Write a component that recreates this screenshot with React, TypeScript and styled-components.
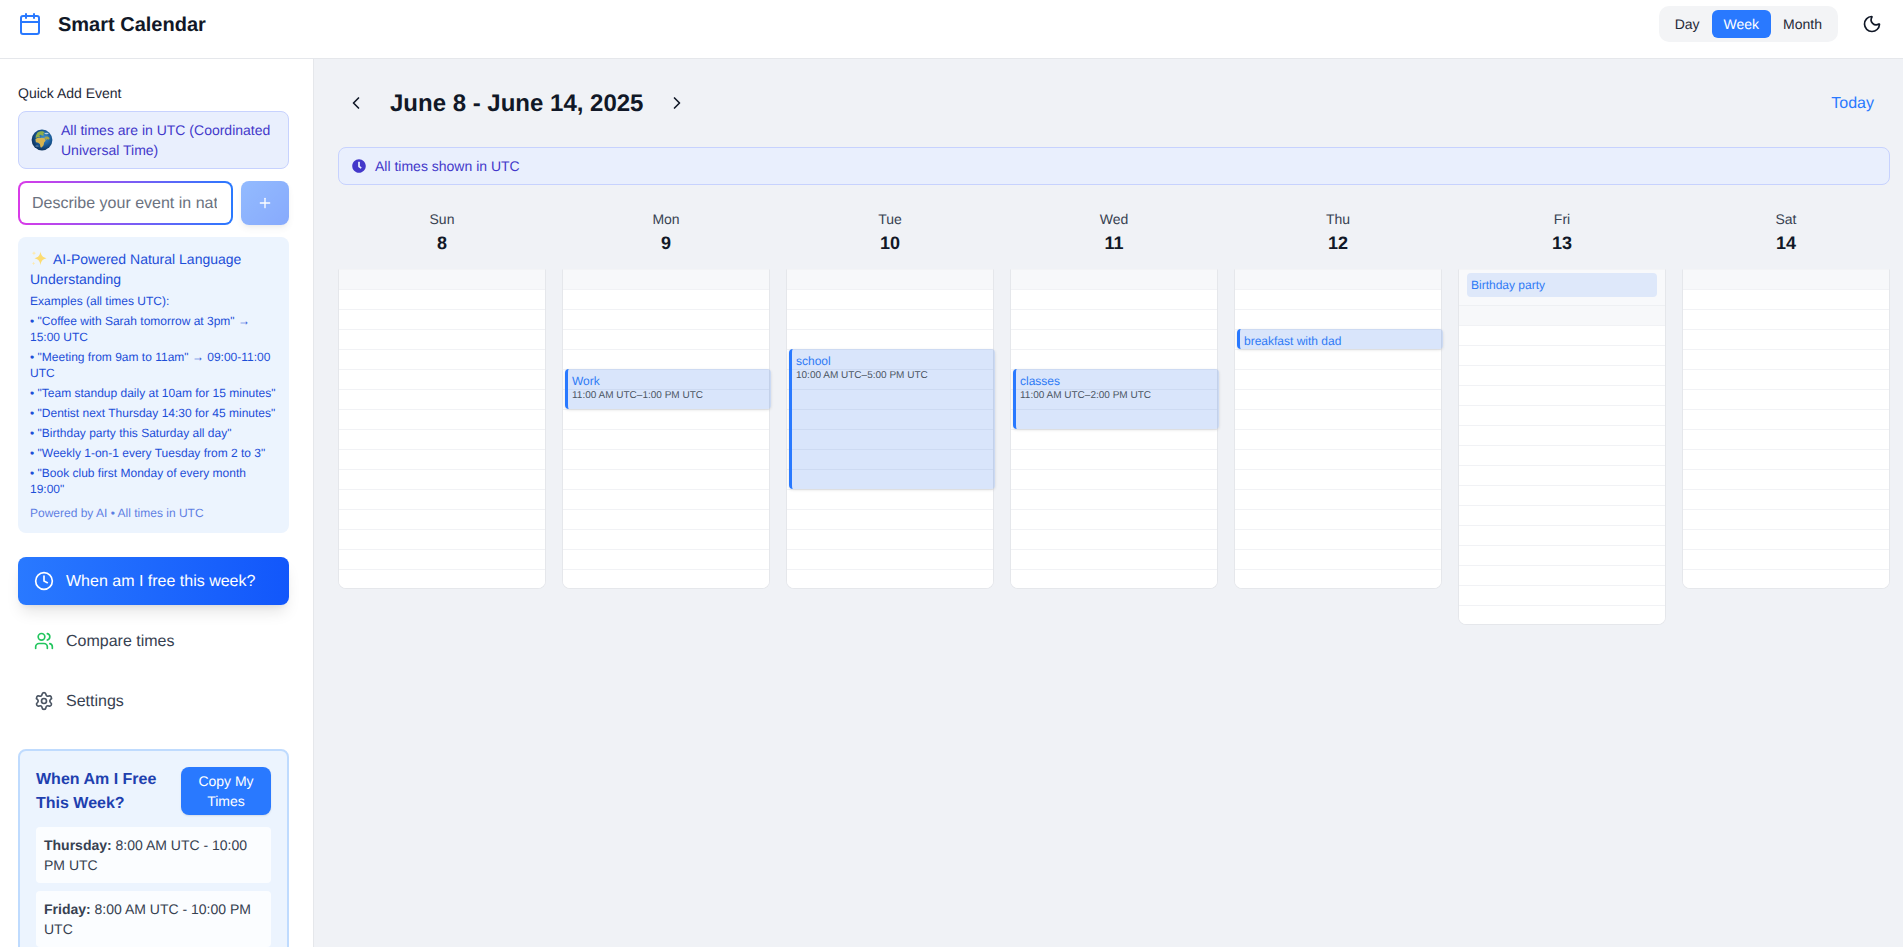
import React from "react";
import styled, { createGlobalStyle } from "styled-components";
import { Calendar, ChevronLeft, ChevronRight, Clock, Moon, Plus, Settings, Users } from "lucide-react";
import { FaClock } from "react-icons/fa";

const Global = createGlobalStyle`
  html, body { margin: 0; height: 100%; overflow: hidden; }
  body {
    font-family: "Liberation Sans", Arial, sans-serif;
    color: #111827;
    background: #f0f2f6;
    text-rendering: geometricPrecision;
  }
  * { box-sizing: border-box; }
  button, input { font-family: inherit; text-rendering: geometricPrecision; }
  button { border: 0; background: none; cursor: pointer; }
`;

const Page = styled.div`
  height: 947px;
  display: flex;
  flex-direction: column;
  overflow: hidden;
`;

const TopBar = styled.header`
  flex: 0 0 59px;
  background: #fff;
  border-bottom: 1px solid #e5e7eb;
  padding: 6px 13px 0 18px;
  display: flex;
  justify-content: space-between;
  align-items: flex-start;
`;

const Brand = styled.div`
  display: flex;
  align-items: center;
  gap: 16px;
  height: 36px;
  color: #2979ff;
`;

const BrandName = styled.h1`
  margin: 0;
  padding-top: 2px;
  font-size: 20px;
  line-height: 28px;
  font-weight: 700;
  color: #111827;
`;

const TopActions = styled.div`
  display: flex;
  align-items: center;
  gap: 16px;
`;

const ViewToggle = styled.div`
  display: flex;
  padding: 4px;
  background: #f3f4f6;
  border-radius: 10px;
`;

const ViewButton = styled.button<{ $active?: boolean }>`
  height: 28px;
  padding: 0 12px;
  font-size: 14px;
  border-radius: 6px;
  color: ${(p) => (p.$active ? "#fff" : "#1f2937")};
  background: ${(p) => (p.$active ? "#2979ff" : "transparent")};
`;

const IconButton = styled.button`
  width: 36px;
  height: 36px;
  padding: 8px;
  display: flex;
  align-items: center;
  justify-content: center;
  color: #111827;
`;

const Body = styled.div`
  flex: 1;
  min-height: 0;
  display: flex;
`;

const Sidebar = styled.aside`
  flex: 0 0 314px;
  background: #fff;
  border-right: 1px solid #e5e7eb;
  padding: 24px 24px 0 18px;
  overflow: hidden;
`;

const SectionLabel = styled.div`
  font-size: 14px;
  line-height: 20px;
  color: #1f2937;
  margin-bottom: 8px;
`;

const UtcNote = styled.div`
  display: flex;
  align-items: center;
  gap: 8px;
  padding: 8px 12px;
  background: #e9effd;
  border: 1px solid #c7d2fe;
  border-radius: 8px;
  font-size: 14px;
  line-height: 20px;
  color: #4338ca;
`;

const GlobeIcon = styled.svg`
  flex: 0 0 22px;
  width: 22px;
  height: 22px;
`;

const QuickRow = styled.div`
  display: flex;
  gap: 8px;
  margin-top: 12px;
`;

const InputFrame = styled.div`
  flex: 1;
  min-width: 0;
  height: 44px;
  padding: 2px;
  border-radius: 8px;
  background: linear-gradient(90deg, #d93be8, #2979ff);
`;

const EventInput = styled.input`
  width: 100%;
  height: 100%;
  border: 0;
  outline: 0;
  border-radius: 6px;
  background: #fff;
  padding: 2px 14px 0 12px;
  font-size: 16px;
  color: #111827;
  &::placeholder { color: #6b7280; opacity: 1; }
`;

const AddButton = styled.button`
  flex: 0 0 48px;
  height: 44px;
  border-radius: 8px;
  display: flex;
  align-items: center;
  justify-content: center;
  color: #fff;
  background: linear-gradient(135deg, #2979ff, #1257fb);
  opacity: 0.5;
  box-shadow: 0 4px 6px -1px rgba(0, 0, 0, 0.1), 0 2px 4px -2px rgba(0, 0, 0, 0.1);
`;

const HintPanel = styled.div`
  margin-top: 12px;
  padding: 12px;
  background: #ecf4fe;
  border-radius: 8px;
  color: #1d4ed8;
  font-size: 12px;
  line-height: 16px;
`;

const HintTitle = styled.div`
  font-size: 14px;
  line-height: 20px;
  margin-bottom: 4px;
`;

const SparkleIcon = styled.svg`
  display: inline-block;
  width: 17px;
  height: 17px;
  margin-right: 6px;
  vertical-align: -3px;
`;

const HintLine = styled.div`
  margin-bottom: 4px;
`;

const HintFoot = styled.div`
  margin-top: 8px;
  opacity: 0.7;
`;

const NavList = styled.nav`
  margin-top: 24px;
  display: flex;
  flex-direction: column;
  gap: 12px;
`;

const NavItem = styled.button<{ $active?: boolean }>`
  height: 48px;
  display: flex;
  align-items: center;
  gap: 12px;
  padding: 0 16px;
  border-radius: 8px;
  font-size: 16px;
  text-align: left;
  color: ${(p) => (p.$active ? "#fff" : "#374151")};
  background: ${(p) => (p.$active ? "linear-gradient(90deg, #2979ff, #1257fb)" : "transparent")};
  box-shadow: ${(p) => (p.$active ? "0 10px 15px -3px rgba(0,0,0,.1), 0 4px 6px -4px rgba(0,0,0,.1)" : "none")};
`;

const NavLabel = styled.span`
  padding-top: 2px;
`;

const FreePanel = styled.section`
  margin-top: 24px;
  padding: 16px;
  background: #ecf4fe;
  border: 2px solid #bfdbfe;
  border-radius: 8px;
`;

const FreeHead = styled.div`
  height: 48px;
  display: flex;
  justify-content: space-between;
  align-items: flex-start;
  gap: 8px;
  margin-bottom: 12px;
`;

const FreeTitle = styled.h3`
  margin: 1px 0 0;
  font-size: 16px;
  line-height: 24px;
  font-weight: 700;
  color: #1e40af;
`;

const CopyButton = styled.button`
  flex: 0 0 90px;
  padding: 4px 12px;
  height: 48px;
  border-radius: 8px;
  background: #2979ff;
  color: #fff;
  font-size: 14px;
  line-height: 20px;
  box-shadow: 0 1px 2px rgba(0, 0, 0, 0.1);
`;

const FreeList = styled.div`
  display: flex;
  flex-direction: column;
  gap: 8px;
`;

const FreeItem = styled.div`
  padding: 8px;
  background: rgba(255, 255, 255, 0.8);
  border-radius: 4px;
  font-size: 14px;
  line-height: 20px;
  color: #374151;
  b { color: #374151; }
`;

const Main = styled.main`
  flex: 1;
  min-width: 0;
  padding: 24px 13px 0 24px;
  background: #f0f2f6;
  overflow: hidden;
`;

const WeekBar = styled.div`
  height: 40px;
  display: flex;
  align-items: center;
  justify-content: space-between;
`;

const WeekNav = styled.div`
  display: flex;
  align-items: center;
  gap: 16px;
`;

const WeekTitle = styled.h2`
  margin: 0;
  padding-top: 2px;
  font-size: 24px;
  line-height: 32px;
  font-weight: 700;
  color: #111827;
`;

const TodayButton = styled.button`
  padding: 9px 16px 7px;
  font-size: 16px;
  line-height: 24px;
  color: #2979ff;
`;

const UtcBar = styled.div`
  margin-top: 24px;
  height: 38px;
  display: flex;
  align-items: center;
  gap: 9px;
  padding: 0 13px;
  background: #e9effd;
  border: 1px solid #c7d2fe;
  border-radius: 8px;
  font-size: 14px;
  color: #4338ca;
`;

const WeekGrid = styled.div`
  margin-top: 24px;
  display: grid;
  grid-template-columns: repeat(7, 208px);
  column-gap: 16px;
  align-items: start;
`;

const DayColumn = styled.div``;

const DayHead = styled.div`
  height: 60px;
  text-align: center;
`;

const DayName = styled.div`
  font-size: 14px;
  line-height: 20px;
  color: #374151;
`;

const DayNumber = styled.div`
  font-size: 18px;
  line-height: 28px;
  font-weight: 700;
  color: #111827;
`;

const DayCard = styled.div`
  position: relative;
  background: #fff;
  border: 1px solid #e5e7eb;
  border-top-color: #f3f4f6;
  border-radius: 0 0 8px 8px;
`;

const AllDayArea = styled.div`
  height: 36px;
  padding: 3px 8px 0;
  background: #f8f9fb;
  border-bottom: 1px solid #eef0f3;
`;

const AllDayChip = styled.div`
  height: 24px;
  padding: 0 4px;
  display: flex;
  align-items: center;
  border-radius: 4px;
  background: #dee8fa;
  color: #2f7bf6;
  font-size: 12px;
`;

const HourStack = styled.div``;

const HourRow = styled.div<{ $shaded?: boolean }>`
  height: 20px;
  background: ${(p) => (p.$shaded ? "#f7f8fa" : "#fff")};
  border-bottom: 1px solid #f1f2f5;
  &:last-child { height: 18px; border-bottom: 0; border-radius: 0 0 7px 7px; }
`;

const EventCard = styled.div<{ $top: number; $height: number }>`
  position: absolute;
  left: 2px;
  right: -2px;
  top: ${(p) => p.$top}px;
  height: ${(p) => p.$height}px;
  padding: 4px 4px 0;
  border-left: 3px solid #2979ff;
  border-radius: 4px;
  background: rgba(30, 100, 230, 0.17);
  box-shadow: 0 1px 3px rgba(0, 0, 0, 0.12);
  overflow: hidden;
`;

const EventTitle = styled.div`
  font-size: 12px;
  line-height: 16px;
  color: #2f7bf6;
`;

const EventTime = styled.div`
  font-size: 10px;
  line-height: 13px;
  color: #4b5563;
`;

type CalEvent = { title: string; time?: string; top: number; height: number };
type Day = { name: string; num: number; events?: CalEvent[]; allDay?: string };

const days: Day[] = [
  { name: "Sun", num: 8 },
  { name: "Mon", num: 9, events: [{ title: "Work", time: "11:00 AM UTC–1:00 PM UTC", top: 99, height: 40 }] },
  { name: "Tue", num: 10, events: [{ title: "school", time: "10:00 AM UTC–5:00 PM UTC", top: 79, height: 140 }] },
  { name: "Wed", num: 11, events: [{ title: "classes", time: "11:00 AM UTC–2:00 PM UTC", top: 99, height: 60 }] },
  { name: "Thu", num: 12, events: [{ title: "breakfast with dad", top: 59, height: 20 }] },
  { name: "Fri", num: 13, allDay: "Birthday party" },
  { name: "Sat", num: 14 },
];

const hours = Array.from({ length: 16 }, (_, i) => i);

const examples = [
  '• "Coffee with Sarah tomorrow at 3pm" → 15:00 UTC',
  '• "Meeting from 9am to 11am" → 09:00-11:00 UTC',
  '• "Team standup daily at 10am for 15 minutes"',
  '• "Dentist next Thursday 14:30 for 45 minutes"',
  '• "Birthday party this Saturday all day"',
  '• "Weekly 1-on-1 every Tuesday from 2 to 3"',
  '• "Book club first Monday of every month 19:00"',
];

const Globe = () => (
  <GlobeIcon viewBox="0 0 22 22" aria-label="Globe">
    <defs>
      <radialGradient id="sea" cx="0.6" cy="0.4" r="0.72">
        <stop offset="0" stopColor="#3f93d6" />
        <stop offset="0.55" stopColor="#17548f" />
        <stop offset="1" stopColor="#0a2344" />
      </radialGradient>
    </defs>
    <circle cx="11" cy="11" r="10.4" fill="url(#sea)" />
    <path d="M6.500 3.500c1.500-1 3.800-1.500 5.500-1.200l1.800 1.400-1.700.9 1 1.600-2 .5-1.400-1-1.500.7 1 1.500-2.800.3-1.700 1.100.1-2.600z" fill="#8fae4a" />
    <path d="M4.400 10.200c1.500-1.100 3.300-1.500 5-1.300 1.800-.4 3.300-.1 4.600.7l.6 2.100-1.500 1.800-.5 2.800-1.900 2.300-1.200-.3-.6-3.400-1.700-1.200-2.300-.5z" fill="#d6b350" />
    <path d="M13.400 8c1-.6 2.200-.7 3.400-.4l1.800 1.500-.6 1.700-1.500-.8-1 .9-1.300-1.200z" fill="#a9a648" />
    <ellipse cx="15.500" cy="4.500" rx="2.200" ry="0.700" fill="#e8f1f8" opacity="0.75" />
    <ellipse cx="6" cy="17" rx="1.800" ry="0.600" fill="#e8f1f8" opacity="0.5" />
  </GlobeIcon>
);

const Sparkles = () => (
  <SparkleIcon viewBox="0 0 17 17" aria-label="Sparkles">
    <path d="M10.500 1.500c.6 4 2 5.700 6 6.800-4 1.100-5.400 2.800-6 6.900-.6-4.100-2-5.800-6-6.900 4-1.100 5.400-2.800 6-6.800z" fill="#fcdc72" />
    <path d="M4 .8c.2 1.500.8 2.100 2.200 2.400C4.800 3.500 4.200 4.100 4 5.600 3.800 4.100 3.200 3.500 1.800 3.200 3.200 2.900 3.800 2.300 4 .8z" fill="#fdeab0" />
    <path d="M3.600 11.500c.2 1.200.6 1.600 1.700 1.900-1.100.3-1.500.7-1.700 1.900-.2-1.200-.6-1.600-1.700-1.900 1.100-.3 1.500-.7 1.700-1.900z" fill="#fdeab0" />
  </SparkleIcon>
);

export default function App() {
  return (
    <Page>
      <Global />
      <TopBar>
        <Brand>
          <Calendar size={24} strokeWidth={2} />
          <BrandName>Smart Calendar</BrandName>
        </Brand>
        <TopActions>
          <ViewToggle>
            <ViewButton>Day</ViewButton>
            <ViewButton $active>Week</ViewButton>
            <ViewButton>Month</ViewButton>
          </ViewToggle>
          <IconButton aria-label="Theme">
            <Moon size={20} />
          </IconButton>
        </TopActions>
      </TopBar>
      <Body>
        <Sidebar>
          <SectionLabel>Quick Add Event</SectionLabel>
          <UtcNote>
            <Globe />
            <span>All times are in UTC (Coordinated Universal Time)</span>
          </UtcNote>
          <QuickRow>
            <InputFrame>
              <EventInput placeholder="Describe your event in natural language..." />
            </InputFrame>
            <AddButton aria-label="Add">
              <Plus size={16} strokeWidth={2} />
            </AddButton>
          </QuickRow>
          <HintPanel>
            <HintTitle>
              <Sparkles />
              AI-Powered Natural Language Understanding
            </HintTitle>
            <HintLine>Examples (all times UTC):</HintLine>
            {examples.map((e) => (
              <HintLine key={e}>{e}</HintLine>
            ))}
            <HintFoot>Powered by AI • All times in UTC</HintFoot>
          </HintPanel>
          <NavList>
            <NavItem $active>
              <Clock size={20} />
              <NavLabel>When am I free this week?</NavLabel>
            </NavItem>
            <NavItem>
              <Users size={20} color="#22c55e" />
              <NavLabel>Compare times</NavLabel>
            </NavItem>
            <NavItem>
              <Settings size={20} color="#4b5563" />
              <NavLabel>Settings</NavLabel>
            </NavItem>
          </NavList>
          <FreePanel>
            <FreeHead>
              <FreeTitle>When Am I Free This Week?</FreeTitle>
              <CopyButton>Copy My Times</CopyButton>
            </FreeHead>
            <FreeList>
              <FreeItem>
                <b>Thursday:</b> 8:00 AM UTC - 10:00 PM UTC
              </FreeItem>
              <FreeItem>
                <b>Friday:</b> 8:00 AM UTC - 10:00 PM UTC
              </FreeItem>
            </FreeList>
          </FreePanel>
        </Sidebar>
        <Main>
          <WeekBar>
            <WeekNav>
              <IconButton aria-label="Previous week">
                <ChevronLeft size={20} />
              </IconButton>
              <WeekTitle>June 8 - June 14, 2025</WeekTitle>
              <IconButton aria-label="Next week">
                <ChevronRight size={20} />
              </IconButton>
            </WeekNav>
            <TodayButton>Today</TodayButton>
          </WeekBar>
          <UtcBar>
            <FaClock size={14} />
            All times shown in UTC
          </UtcBar>
          <WeekGrid>
            {days.map((d) => (
              <DayColumn key={d.name}>
                <DayHead>
                  <DayName>{d.name}</DayName>
                  <DayNumber>{d.num}</DayNumber>
                </DayHead>
                <DayCard>
                  {d.allDay && (
                    <AllDayArea>
                      <AllDayChip>{d.allDay}</AllDayChip>
                    </AllDayArea>
                  )}
                  <HourStack>
                    {hours.map((h) => (
                      <HourRow key={h} $shaded={h === 0} />
                    ))}
                  </HourStack>
                  {d.events?.map((e) => (
                    <EventCard key={e.title} $top={e.top} $height={e.height}>
                      <EventTitle>{e.title}</EventTitle>
                      {e.time && <EventTime>{e.time}</EventTime>}
                    </EventCard>
                  ))}
                </DayCard>
              </DayColumn>
            ))}
          </WeekGrid>
        </Main>
      </Body>
    </Page>
  );
}
